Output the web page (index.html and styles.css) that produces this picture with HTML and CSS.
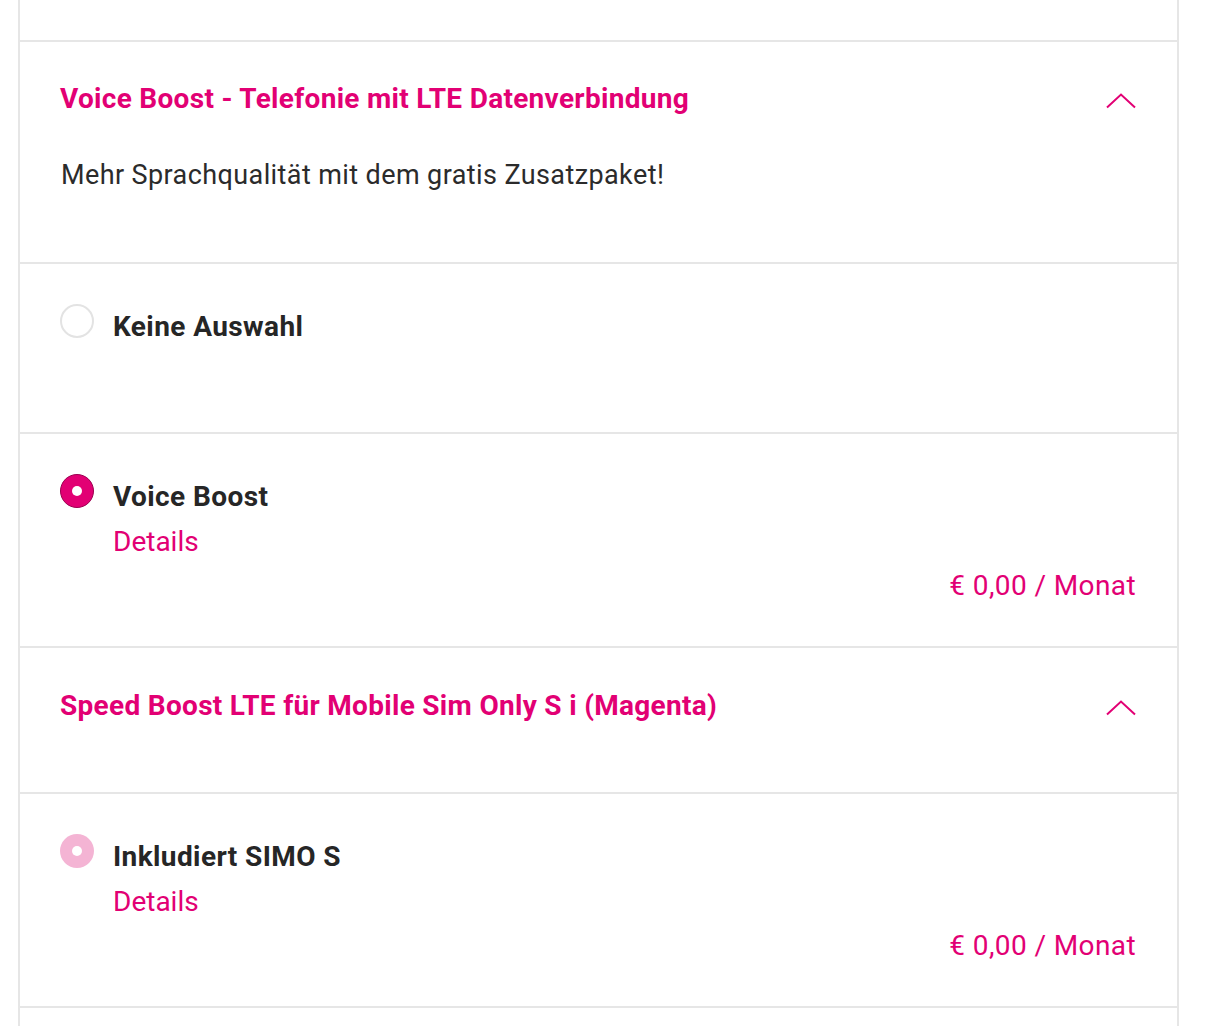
FILE: index.html
```html
<!DOCTYPE html>
<html lang="de">
<head>
<meta charset="utf-8">
<title>Zusatzoptionen</title>
<link rel="stylesheet" href="styles.css">
</head>
<body>
<div class="card">
  <div class="section top"></div>

  <div class="section header">
    <div class="header-row">
      <h2 class="title">Voice Boost - Telefonie mit LTE Datenverbindung</h2>
      <svg class="chevron" width="30" height="16" viewBox="0 0 30 16"><polyline points="1,14.5 15,1.5 29,14.5" fill="none" stroke="#e20074" stroke-width="2"/></svg>
    </div>
    <p class="desc">Mehr Sprachqualität mit dem gratis Zusatzpaket!</p>
  </div>

  <div class="section option option-empty">
    <span class="radio"></span>
    <div class="opt-body">
      <div class="label">Keine Auswahl</div>
    </div>
  </div>

  <div class="section option">
    <span class="radio checked"></span>
    <div class="opt-body">
      <div class="label">Voice Boost</div>
      <a class="details" href="#">Details</a>
      <div class="price">€ 0,00 / Monat</div>
    </div>
  </div>

  <div class="section header header-only">
    <div class="header-row">
      <h2 class="title">Speed Boost LTE für Mobile Sim Only S i (Magenta)</h2>
      <svg class="chevron" width="30" height="16" viewBox="0 0 30 16"><polyline points="1,14.5 15,1.5 29,14.5" fill="none" stroke="#e20074" stroke-width="2"/></svg>
    </div>
  </div>

  <div class="section option">
    <span class="radio disabled"></span>
    <div class="opt-body">
      <div class="label">Inkludiert SIMO S</div>
      <a class="details" href="#">Details</a>
      <div class="price">€ 0,00 / Monat</div>
    </div>
  </div>

  <div class="section rest"></div>
</div>
</body>
</html>
```

FILE: styles.css
```css
html, body {
  margin: 0;
  padding: 0;
  background: #ffffff;
}

body {
  font-family: Roboto, "Liberation Sans", Arial, sans-serif;
  color: #262626;
}

.card {
  margin-left: 18px;
  width: 1161px;
  box-sizing: border-box;
  border-left: 2px solid #e6e6e6;
  border-right: 2px solid #e6e6e6;
}

.section {
  border-bottom: 2px solid #e6e6e6;
  box-sizing: border-box;
}

.top {
  height: 42px;
}

.header {
  padding: 39px 41px 69px 40px;
}

.header-only {
  padding-top: 40px;
  padding-bottom: 68px;
}

.header-row {
  display: flex;
  align-items: center;
  justify-content: space-between;
}

.title {
  margin: 0;
  font-size: 28px;
  line-height: 36px;
  font-weight: 700;
  color: #e20074;
  letter-spacing: 0.3px;
}

.chevron {
  display: block;
  margin-top: 4px;
  margin-right: 0;
}

.desc {
  margin: 40px 0 0 1px;
  font-size: 27px;
  line-height: 36px;
  font-weight: 400;
  color: #2b2b2b;
  letter-spacing: 0.4px;
}

.option {
  display: flex;
  align-items: flex-start;
  padding: 40px 41px 42px 40px;
}

.option-empty {
  height: 170px;
}

.radio {
  flex: none;
  width: 34px;
  height: 34px;
  border-radius: 50%;
  box-sizing: border-box;
  border: 2px solid #e3e3e3;
  margin-right: 19px;
  position: relative;
}

.radio.checked {
  background: #e20074;
  border: 1px solid #9c0050;
}

.radio.disabled {
  background: #f4b4d4;
  border: none;
}

.radio.checked::after,
.radio.disabled::after {
  content: "";
  position: absolute;
  left: 50%;
  top: 50%;
  width: 10px;
  height: 10px;
  margin: -5px 0 0 -5px;
  border-radius: 50%;
  background: #ffffff;
}

.opt-body {
  flex: 1;
  display: flex;
  flex-direction: column;
  margin-top: 5px;
}

.label {
  font-size: 28px;
  line-height: 36px;
  font-weight: 700;
  color: #262626;
  letter-spacing: 0.4px;
}

.details {
  margin-top: 9px;
  font-size: 28px;
  line-height: 36px;
  font-weight: 400;
  color: #e20074;
  text-decoration: none;
  align-self: flex-start;
}

.price {
  margin-top: 8px;
  font-size: 28px;
  line-height: 36px;
  font-weight: 400;
  color: #e20074;
  text-align: right;
  letter-spacing: 0.4px;
}

.rest {
  height: 40px;
  border-bottom: none;
}
```
